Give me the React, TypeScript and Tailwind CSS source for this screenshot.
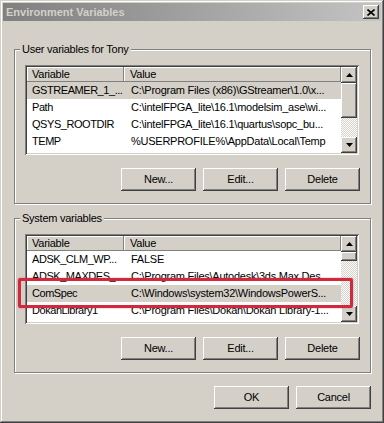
import React from "react";

const raised =
  "shadow-[inset_-1px_-1px_#404040,inset_1px_1px_#ffffff,inset_-2px_-2px_#808080,inset_2px_2px_#d4d0c8]";

function Btn({ children }: { children: React.ReactNode }) {
  return (
    <div className={`w-[75px] h-[23px] flex items-center justify-center bg-[#d4d0c8] ${raised}`}>
      {children}
    </div>
  );
}

function Arrow({ down }: { down?: boolean }) {
  return (
    <div className={`w-[16px] h-[16px] flex items-center justify-center bg-[#d4d0c8] ${raised}`}>
      <svg width="7" height="4" viewBox="0 0 7 4">
        {down ? <polygon points="0,0 7,0 3.5,4" fill="#000" /> : <polygon points="0,4 7,4 3.5,0" fill="#000" />}
      </svg>
    </div>
  );
}

type Row = { name: string; value: string; sel?: boolean };

function ListView({ rows, thumbTop, thumbH }: { rows: Row[]; thumbTop: number; thumbH: number }) {
  const dither =
    "bg-[repeating-conic-gradient(#d4d0c8_0%_25%,#ffffff_0%_50%)] bg-[length:2px_2px]";
  return (
    <div className="w-[334px] h-[90px] bg-white p-[2px] flex shadow-[inset_1px_1px_#808080,inset_-1px_-1px_#ffffff,inset_2px_2px_#404040,inset_-2px_-2px_#d4d0c8]">
      <div className="flex-1 overflow-hidden flex flex-col">
        <div className="h-[15px] flex shrink-0">
          <div className="w-[97px] bg-[#d4d0c8] pl-[5px] leading-[15px] shadow-[inset_-1px_-1px_#808080,inset_1px_1px_#ffffff]">
            Variable
          </div>
          <div className="flex-1 bg-[#d4d0c8] pl-[6px] leading-[15px] shadow-[inset_-1px_-1px_#808080,inset_1px_1px_#ffffff]">
            Value
          </div>
        </div>
        {rows.map((r, i) => (
          <div key={i} className={`h-[17px] flex items-center shrink-0 whitespace-nowrap ${r.sel ? "bg-[#d4d0c8]" : ""}`}>
            <div className="w-[97px] pl-[5px] overflow-hidden tracking-[-0.45px]">{r.name}</div>
            <div className="flex-1 pl-[7px] overflow-hidden">{r.value}</div>
          </div>
        ))}
      </div>
      <div className="w-[16px] flex flex-col">
        <Arrow />
        <div className={`flex-1 flex flex-col ${dither}`}>
          <div style={{ height: thumbTop }} />
          <div className={`bg-[#d4d0c8] ${raised}`} style={{ height: thumbH }} />
        </div>
        <Arrow down />
      </div>
    </div>
  );
}

function Group({ title, children }: { title: string; children: React.ReactNode }) {
  return (
    <div className="relative h-[155px] border border-[#808080] shadow-[1px_1px_0_#ffffff,inset_1px_1px_0_#ffffff] px-[10px] pt-[15px]">
      <span className="absolute left-[5px] top-[-7px] px-[2px] bg-[#d4d0c8] leading-[13px]">{title}</span>
      {children}
    </div>
  );
}

export default function App() {
  const userRows: Row[] = [
    { name: "GSTREAMER_1_...", value: "C:\\Program Files (x86)\\GStreamer\\1.0\\x...", sel: true },
    { name: "Path", value: "C:\\intelFPGA_lite\\16.1\\modelsim_ase\\wi..." },
    { name: "QSYS_ROOTDIR", value: "C:\\intelFPGA_lite\\16.1\\quartus\\sopc_bu..." },
    { name: "TEMP", value: "%USERPROFILE%\\AppData\\Local\\Temp" },
    { name: "TMP", value: "%USERPROFILE%\\AppData\\Local\\Temp" },
  ];
  const sysRows: Row[] = [
    { name: "ADSK_CLM_WP...", value: "FALSE" },
    { name: "ADSK_MAXDES_...", value: "C:\\Program Files\\Autodesk\\3ds Max Des..." },
    { name: "ComSpec", value: "C:\\Windows\\system32\\WindowsPowerS...", sel: true },
    { name: "DokanLibrary1", value: "C:\\Program Files\\Dokan\\Dokan Library-1..." },
    { name: "DriverData", value: "C:\\Windows\\System32\\Drivers\\DriverData" },
  ];
  return (
    <div className="relative w-[384px] h-[423px] bg-[#d4d0c8] p-[3px] text-[11px] tracking-[-0.25px] text-black font-['Liberation_Sans',Arial,sans-serif] shadow-[inset_-1px_-1px_#404040,inset_1px_1px_#d4d0c8,inset_-2px_-2px_#808080,inset_2px_2px_#ffffff]">
      <div className="h-[18px] flex items-center justify-between pl-[3px] pr-[2px] bg-linear-to-r from-[#808080] to-[#c4c4c4]">
        <span className="font-bold text-[#d4d0c8] tracking-normal">Environment Variables</span>
        <div className={`w-[16px] h-[14px] flex items-center justify-center bg-[#d4d0c8] ${raised}`}>
          <svg width="8" height="7" viewBox="0 0 8 7">
            <path d="M0.5 0.5 L7.5 6.5 M7.5 0.5 L0.5 6.5" stroke="#000" strokeWidth="1.6" />
          </svg>
        </div>
      </div>
      <div className="pl-[11px] pr-[10px] pt-[28px]">
        <Group title="User variables for Tony">
          <ListView rows={userRows} thumbTop={0} thumbH={35} />
          <div className="mt-[13px] flex justify-end gap-[7px]">
            <Btn>New...</Btn>
            <Btn>Edit...</Btn>
            <Btn>Delete</Btn>
          </div>
        </Group>
        <div className="mt-[14px]">
          <Group title="System variables">
            <ListView rows={sysRows} thumbTop={0} thumbH={9} />
            <div className="mt-[13px] flex justify-end gap-[7px]">
              <Btn>New...</Btn>
              <Btn>Edit...</Btn>
              <Btn>Delete</Btn>
            </div>
          </Group>
        </div>
        <div className="mt-[13px] flex justify-end gap-[7px]">
          <Btn>OK</Btn>
          <Btn>Cancel</Btn>
        </div>
      </div>
      <div className="absolute left-[18px] top-[278px] w-[335px] h-[30px] border-[3px] border-[#d0283c] rounded-[2px] shadow-[0_0_2px_rgba(208,40,60,0.5)]" />
    </div>
  );
}
